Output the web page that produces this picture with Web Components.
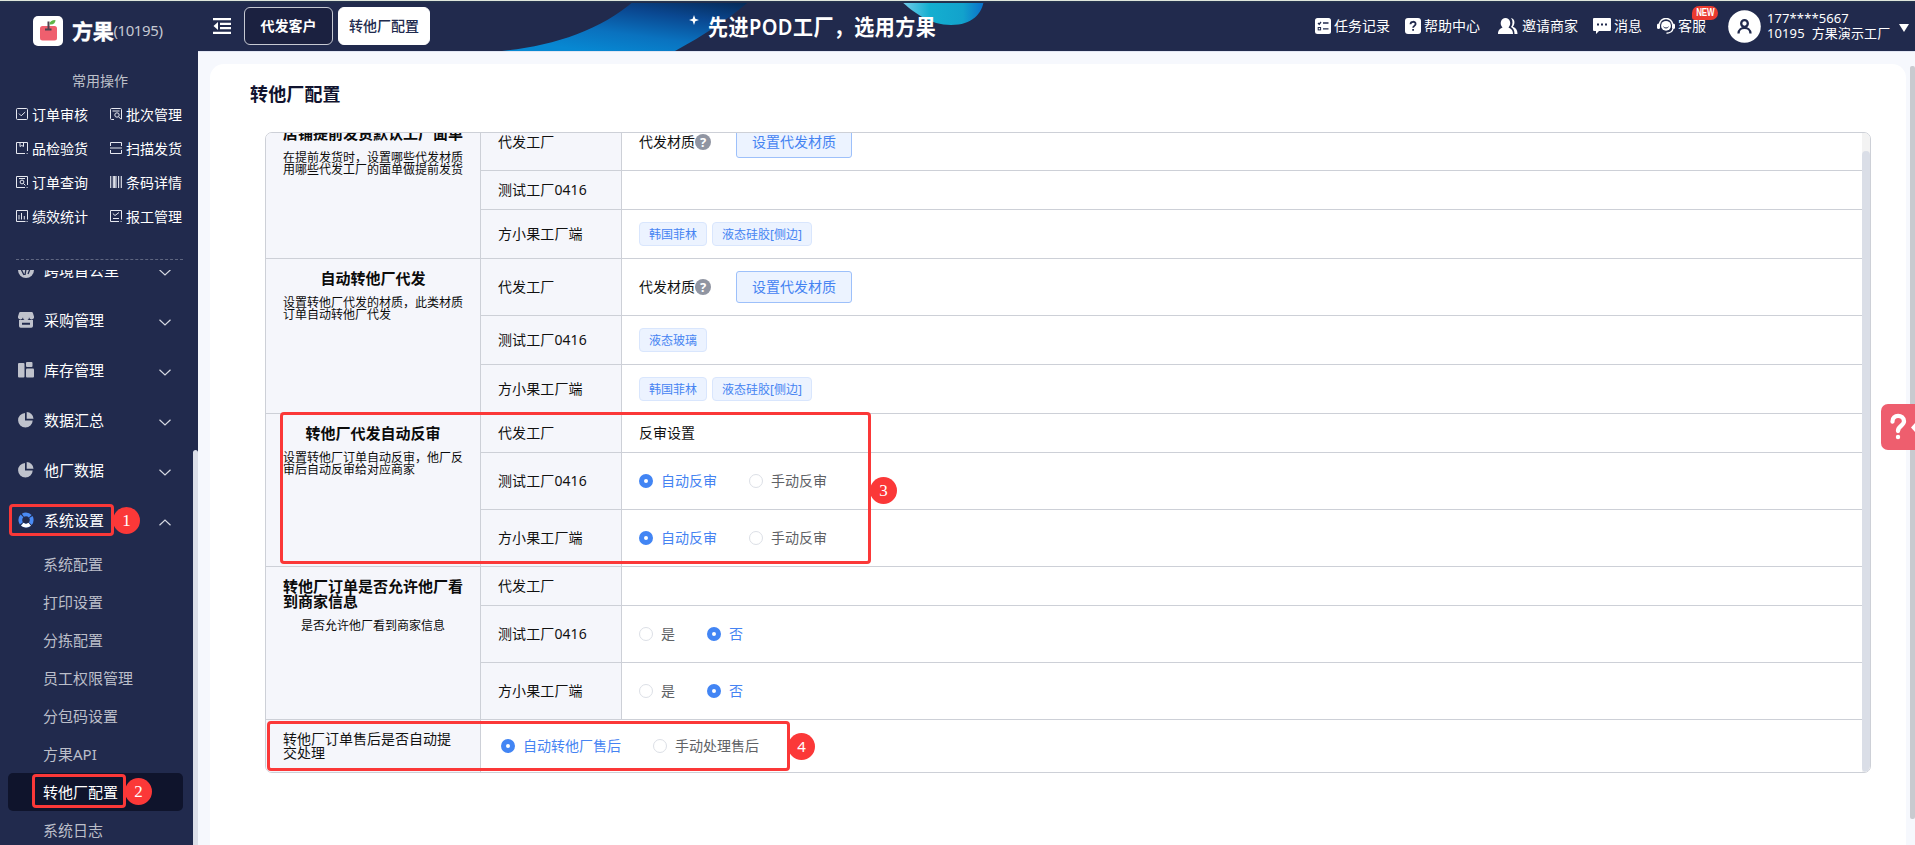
<!DOCTYPE html>
<html lang="zh-CN">
<head>
<meta charset="utf-8">
<title>转他厂配置</title>
<style>
html,body{margin:0;height:100%;overflow:hidden}
body{font-family:"Noto Sans","Noto Sans CJK SC",sans-serif;font-size:14px;color:#111;background:#f6f8fd}
</style>
</head>
<body>
<factory-app></factory-app>
<script>
const define=(name,html,after)=>{
  const t=document.createElement('template');
  t.innerHTML=html;
  customElements.define(name,class extends HTMLElement{
    constructor(){super();this.attachShadow({mode:'open'}).append(t.content.cloneNode(true));}
    connectedCallback(){if(after)after(this,this.shadowRoot);}
  });
};

const ICONS={
  check:'<rect x=".5" y=".5" width="11" height="11" rx="1"/><path d="M3 5.6l2.2 2.2L9.2 4"/>',
  batch:'<path d="M4 11.5H1.5a1 1 0 0 1-1-1v-9a1 1 0 0 1 1-1h9a1 1 0 0 1 1 1V11M2.5 3h7"/><circle cx="7" cy="7" r="2.2"/><path d="M8.6 8.8l2.6 2.6"/>',
  box:'<path d="M9 11.5H.5v-11h11V9M4 .5v4l1.8-1 1.7 1v-4M10.6 11.5h1"/>',
  scan:'<path d="M.5 4V.5h11V4M.5 8v3.5h11V8M0 6h12"/>',
  find:'<path d="M9 11.5H.5v-11h11V9M3 2.5h6M10.6 11.5h1"/><circle cx="6" cy="6" r="1.9"/><path d="M7.4 7.4l2 2"/>',
  bar:'<path d="M.7 0v12M3.3 0v12M6 0v12M8.6 0v12M11.3 0v12M4.6 0v12" stroke-width="1.1"/>',
  stat:'<path d="M9.5 11.5h-9v-11h11v9M3 9.5V5M5.5 9.5V3M8.3 9.5V6M10.6 11.5h1"/>',
  work:'<path d="M9 11.5H.5v-11h11v9M2.8 3.5L5 5.5 9 2.5M3 8.5h6M10.6 11.5h1"/>'
};
define('quick-link',`<style>
:host{display:flex;align-items:center;gap:4px;height:34px;width:72px;color:#fff;font-size:14px;line-height:20px;white-space:nowrap}
svg{flex:none;fill:none;stroke:#e6e8f0;stroke-width:1;margin-top:-2px}
</style><svg width="12" height="12" viewBox="0 0 12 12"></svg><slot></slot>`,
(h,r)=>{r.querySelector('svg').innerHTML=ICONS[h.getAttribute('icon')];});

const MENU={
  world:'<path d="M0 8a8 8 0 0 0 16 0z"/><path d="M3 7l3 6M8 7l-1 6M12 7l-2 5" stroke="#212a4d" stroke-width="1.3" fill="none"/>',
  shop:'<path d="M2.5 0h11A1.5 1.5 0 0 1 15 1.200L16 4.500a2.500 2.500 0 0 1-5 .8 3 3 0 0 1-6 0 2.500 2.500 0 0 1-5-.8L1 1.200A1.500 1.500 0 0 1 2.500 0z"/><path fill-rule="evenodd" d="M1 8h14v6a1.700 1.700 0 0 1-1.700 1.700H2.700A1.700 1.700 0 0 1 1 14zM4 10.700v2h8v-2z"/>',
  store:'<rect x="0" y="1" width="6.500" height="14.500" rx="1"/><rect x="8" y="0" width="6.500" height="5" rx="1"/><rect x="8" y="6.500" width="8" height="9" rx="1"/>',
  pie:'<path d="M7 1v7.500h7.700A7.300 7.300 0 1 1 7 1z"/><path d="M8.700 0A7.200 7.200 0 0 1 15.500 6.800H8.700z"/>',
  ring:'<g fill="none" stroke-width="3.800"><circle cx="8" cy="8" r="5.700" stroke="#4a8bf5" stroke-dasharray="7.900 1.053" stroke-dashoffset="3.950"/><path d="M4.300 12.300a5.700 5.700 0 0 0 7.400 0" stroke="#fff"/></g>'
};
define('menu-item',`<style>
:host{display:flex;align-items:center;height:50px;padding:0 22px 0 18px;color:#fff;font-size:15px;line-height:22px;white-space:nowrap}
.i{flex:none;fill:#bfc2cc;margin:0 10px 0 0}
span{flex:1}
.c{fill:none;stroke:#d6d9e2;stroke-width:1.200;margin-top:4px}
:host([open]) .c{transform:scaleY(-1)}
</style><svg class="i" width="16" height="16" viewBox="0 0 16 16"></svg><span><slot></slot></span><svg class="c" width="12" height="7" viewBox="0 0 12 7"><path d="M.5.8L6 6 11.500.8"/></svg>`,
(h,r)=>{r.querySelector('.i').innerHTML=MENU[h.getAttribute('icon')];});

define('sub-item',`<style>
:host{display:flex;align-items:center;height:38px;margin:0 10px 0 8px;border-radius:5px;color:#bbbec9;font-size:15px;white-space:nowrap;line-height:22px}
:host([active]){background:#0f142c;color:#fff}
span{margin:0 0 0 35px}
</style><span><slot></slot></span>`);

define('side-bar',`<style>
:host{display:flex;flex-direction:column;width:198px;height:845px;background:#212a4d;color:#fff;overflow:hidden}
.logo{display:flex;align-items:center;height:30px;padding:16px 0 0 33px;flex:none}
.logo b{font-size:21px;line-height:30px;margin-left:9px;letter-spacing:-.3px;-webkit-text-stroke:.4px #fff}
.logo i{font-style:normal;font-size:15px;color:#c5c8d2;line-height:28px;letter-spacing:-.4px;margin-top:-2px}
h4{margin:25px 0 0;padding-left:2px;text-align:center;font-weight:400;font-size:14px;line-height:20px;color:#bdc0ca;flex:none}
.q{display:grid;grid-template-columns:94px 72px;padding:7px 0 0 16px;flex:none}
hr{width:167px;margin:25px 0 0 16px;border:0;border-top:1px dashed #5f6680;flex:none}
.v{margin-top:10px;flex:1;overflow:hidden;display:flex}
.l{width:193px;box-sizing:border-box;margin-top:-25px;flex:none}
.t{width:5px;background:#dcdfe8;border-radius:3px 3px 0 0;margin-top:180px;height:500px}
</style>
<div class="logo"><svg width="30" height="30" viewBox="0 0 30 30"><rect width="30" height="30" rx="5" fill="#fff"/><rect x="7" y="10" width="17" height="14.500" rx="2.500" fill="#ef5f6e"/><path d="M12 13.500h6.500M15.500 13V5.500" stroke="#4d4350" stroke-width="2" fill="none"/><path d="M16.500 8.500c0-3 2-4.500 6-4.500 0 3-2 5-6 4.500z" fill="#5fb548"/></svg><b>方果</b><i>(10195)</i></div>
<h4>常用操作</h4>
<div class="q"><quick-link icon="check">订单审核</quick-link><quick-link icon="batch">批次管理</quick-link><quick-link icon="box">品检验货</quick-link><quick-link icon="scan">扫描发货</quick-link><quick-link icon="find">订单查询</quick-link><quick-link icon="bar">条码详情</quick-link><quick-link icon="stat">绩效统计</quick-link><quick-link icon="work">报工管理</quick-link></div>
<hr>
<div class="v"><div class="l"><menu-item icon="world">跨境首公里</menu-item><menu-item icon="shop">采购管理</menu-item><menu-item icon="store">库存管理</menu-item><menu-item icon="pie">数据汇总</menu-item><menu-item icon="pie">他厂数据</menu-item><menu-item icon="ring" open>系统设置</menu-item>
<sub-item>系统配置</sub-item><sub-item>打印设置</sub-item><sub-item>分拣配置</sub-item><sub-item>员工权限管理</sub-item><sub-item>分包码设置</sub-item><sub-item>方果API</sub-item><sub-item active>转他厂配置</sub-item><sub-item>系统日志</sub-item></div><div class="t"></div></div>`);

const HEAD={
  task:'<rect x="0" y="0" width="16" height="16" rx="2.500" fill="#fff"/><path d="M3 5l1.200 1.200L6 4M8 5h5.500M8 10.800h5.500" stroke="#212a4d" stroke-width="1.300" fill="none"/><rect x="3.200" y="9.500" width="2.400" height="2.400" fill="none" stroke="#212a4d"/>',
  help:'<rect x="0" y="0" width="16" height="16" rx="3" fill="#fff"/><path d="M5.500 6.200C5.500 3 10.600 3 10.600 6c0 1.900-2.500 1.900-2.500 3.800M8.100 11v1.800" stroke="#212a4d" stroke-width="1.800" fill="none"/>',
  users:'<path d="M0 16c0-4 2-5.500 4.500-6.500C1 6 3 0 7.500 0s6.500 6 3 9.500C13 10.500 15 12 15 16zM13 0c4 .5 4.500 6 1.800 8.800 3 1.200 4.700 3 4.700 7.200h-3c0-3.500-1-5.500-3.500-7C15 6.500 15 2.500 13 0z" fill="#fff"/>',
  chat:'<path d="M1 0h16a1 1 0 0 1 1 1v11a1 1 0 0 1-1 1H6l-3 3v-3H1a1 1 0 0 1-1-1V1a1 1 0 0 1 1-1z" fill="#fff"/><path d="M4 6.500h2M8 6.500h2M12 6.500h2" stroke="#212a4d" stroke-width="2"/>',
  care:'<path d="M2.500 6.500a6.500 6 0 0 1 13 0" fill="none" stroke="#fff" stroke-width="1.500"/><circle cx="9" cy="7.800" r="4.900" fill="#fff"/><rect x="0" y="5.500" width="3" height="5.500" rx="1.500" fill="#fff"/><rect x="15" y="5.500" width="3" height="5.500" rx="1.500" fill="#fff"/><path d="M16 10.500c-.5 3-3 4.500-6.500 4.700" fill="none" stroke="#fff" stroke-width="1.500"/><path d="M6.500 8.800c1.200 1.600 3.800 1.600 5 0" fill="none" stroke="#212a4d"/>'
};
define('head-link',`<style>
:host{display:flex;align-items:center;color:#fff;font-size:14px;line-height:20px;white-space:nowrap;position:relative}
svg{margin-right:3px}
em{position:absolute;right:-12px;top:-10px;width:26px;height:14px;border-radius:7px 7px 7px 3px;background:#ea3a30;font:700 10px/14px "Liberation Sans",sans-serif;text-align:center;letter-spacing:-.3px}
em span{display:inline-block;transform:scaleX(.8);margin:0 -4px}
</style><svg height="16"></svg><slot></slot>`,
(h,r)=>{const s=r.querySelector('svg');s.setAttribute('width',h.getAttribute('w'));s.innerHTML=HEAD[h.getAttribute('icon')];
if(h.hasAttribute('new'))s.insertAdjacentHTML('afterend','<em><span>NEW</span></em>');});

define('head-tab',`<style>
:host{display:flex;align-items:center;justify-content:center;box-sizing:border-box;height:38px;width:89px;border:1px solid #c6c9d2;border-radius:6px;background:#1b2140;color:#fff;font-size:14px;font-weight:700;line-height:20px;white-space:nowrap}
:host([active]){background:#fff;border-color:#fff;color:#212a4d;width:92px;margin-left:5px;font-weight:500}
</style><slot></slot>`);

define('app-header',`<style>
:host{display:grid;grid-template-columns:1fr;height:51px;background:#212a4d;overflow:hidden}
.art,.bar{grid-area:1/1}
.art{margin-left:300px}
.bar{display:flex;align-items:center;padding:1px 6px 0 15px;z-index:1;min-width:0}
.m{margin-right:13px}
.t{display:flex;align-items:center;margin-left:259px;color:#fff;font-size:20px;letter-spacing:.45px;font-weight:600;line-height:30px;white-space:nowrap;padding-top:3px}
.t svg{margin:-16px 9px 0 0}
.t span{display:inline-block;transform:scaleY(1.060);width:228px}
.r{display:flex;align-items:center;margin-left:auto;gap:15px}
.r [icon=help]{margin-right:3px}
.u{display:flex;align-items:center;margin-left:7px;color:#fff;gap:6px;font-size:13px;line-height:15px;white-space:pre}
.u .n{width:124px;letter-spacing:.1px}
.u svg:last-child{margin:3px 0 0 2px}
</style>
<svg class="art" width="600" height="51" viewBox="498 0 600 51"><defs>
<linearGradient id="s" x1="1" y1="0" x2=".35" y2="1"><stop offset="0" stop-color="#04264f"/><stop offset=".35" stop-color="#0a4790"/><stop offset=".7" stop-color="#0a72bf"/><stop offset="1" stop-color="#0788d2"/></linearGradient>
<linearGradient id="b"><stop offset="0" stop-color="#7ccfec"/><stop offset=".35" stop-color="#14afd0"/><stop offset=".75" stop-color="#12a2cc"/><stop offset="1" stop-color="#0a6fca"/></linearGradient></defs>
<path d="M502 51C552 46 600 31 635 0H751Q718 28 675 51z" fill="url(#s)"/>
<path d="M900 0C914 13 930 25 951 25C972 25 982 14 984 0z" fill="url(#b)"/></svg>
<div class="bar">
<svg class="m" width="18" height="16" viewBox="0 0 18 16" fill="#fff"><path d="M0 0h18v2.300H0zM7 4.700h11V7H7zM7 9h11v2.300H7zM0 13.700h18V16H0zM5 4v8L.5 8z"/></svg>
<head-tab>代发客户</head-tab><head-tab active>转他厂配置</head-tab>
<div class="t"><svg width="10" height="10" viewBox="0 0 10 10"><path d="M5 0L6.300 3.700 10 5 6.300 6.300 5 10 3.700 6.300 0 5 3.700 3.700z" fill="#fff"/></svg><span>先进POD工厂，选用方果</span></div>
<div class="r"><head-link icon="task" w="16">任务记录</head-link><head-link icon="help" w="16">帮助中心</head-link><head-link icon="users" w="21">邀请商家</head-link><head-link icon="chat" w="18">消息</head-link><head-link icon="care" w="18" new>客服</head-link>
<div class="u"><svg width="33" height="33" viewBox="0 0 33 33"><circle cx="16.500" cy="16.500" r="16.300" fill="#fff"/><circle cx="16.500" cy="13.500" r="3.300" fill="none" stroke="#212a4d" stroke-width="2.300"/><path d="M10.500 23.500c0-7.500 12-7.500 12 0" fill="none" stroke="#212a4d" stroke-width="2.300"/></svg><div class="n"><div>177****5667</div><div>10195  方果演示工厂</div></div><svg width="10" height="8" viewBox="0 0 10 8"><path d="M0 0h10L5 8z" fill="#fff"/></svg></div></div>
</div>`);

define('mat-tag',`<style>:host{display:block;box-sizing:border-box;height:24px;padding:0 9px;border:1px solid #d9e6fd;border-radius:4px;background:#ecf3ff;color:#4583f2;font-size:12px;line-height:23px;white-space:nowrap;margin-right:5px}</style><slot></slot>`);
define('mat-button',`<style>:host{display:block;box-sizing:border-box;width:116px;height:32px;margin-left:25px;border:1px solid #9dc0fa;border-radius:3px;background:#ecf3ff;color:#4583f2;font-size:14px;line-height:30px;text-align:center}</style><slot></slot>`);
define('radio-option',`<style>
:host{display:flex;align-items:center;gap:8px;margin-right:32px;color:#606266;line-height:20px}
i{box-sizing:border-box;width:14px;height:14px;border:1px solid #dcdfe6;border-radius:50%;background:#fff}
:host([on]){color:#4583f2}:host([on]) i{border:5px solid #4285f4}
</style><i></i><slot></slot>`);
define('help-dot',`<style>:host{display:block;width:16px;height:16px;border-radius:50%;background:#9095a2;color:#fff;font-size:13px;font-weight:700;line-height:16px;text-align:center}</style>?`);
define('config-group',`<style>
:host{display:grid;grid-template-columns:215px 1fr}
.h{box-sizing:border-box;background:#f5f6fb;border-right:1px solid #cdd0d7;border-bottom:1px solid #cdd0d7;padding:12px 17px;display:flex;flex-direction:column;align-items:center;color:#0b0b0b}
b{font-size:15px;line-height:15px}
p{margin:11px 0 0;font-size:12px;line-height:12px}
</style><div class="h"><b></b><p></p></div><div><slot></slot></div>`,
(h,r)=>{r.querySelector('b').textContent=h.getAttribute('name');r.querySelector('p').textContent=h.getAttribute('note');});
define('config-row',`<style>
:host{display:grid;grid-template-columns:141px 1fr;height:57px}
:host([s]){height:39px}:host([m]){height:49px}
div{display:flex;align-items:center;box-sizing:border-box;border-bottom:1px solid #cdd0d7;padding-left:17px;line-height:20px}
.n{background:#f5f6fb;border-right:1px solid #cdd0d7;letter-spacing:.1px}
</style><div class="n"></div><div><slot></slot></div>`,
(h,r)=>{r.querySelector('.n').textContent=h.getAttribute('name');});

define('config-table',`<style>
:host{display:flex;box-sizing:border-box;width:1606px;height:641px;border:1px solid #cdd0d7;border-radius:7px;overflow:hidden;background:#fff}
.c{flex:1;margin-top:-19px}
.s{width:8px;background:#f3f3f3}
.s i{display:block;margin-top:18px;height:621px;border-radius:4px;background:#dadee7}
.last{display:grid;grid-template-columns:215px 1fr;height:52px}
.last div{display:flex;align-items:center;box-sizing:border-box}
.last .h{background:#f5f6fb;border-right:1px solid #cdd0d7;padding:0 17px;line-height:14px}
.last .b{padding-left:20px}
</style><div class="c">
<config-group name="店铺提前发货默认工厂面单" note="在提前发货时，设置哪些代发材质用哪些代发工厂的面单做提前发货"><config-row name="代发工厂">代发材质<help-dot></help-dot><mat-button>设置代发材质</mat-button></config-row><config-row s name="测试工厂0416"></config-row><config-row m name="方小果工厂端"><mat-tag>韩国菲林</mat-tag><mat-tag>液态硅胶[侧边]</mat-tag></config-row></config-group>
<config-group name="自动转他厂代发" note="设置转他厂代发的材质，此类材质订单自动转他厂代发"><config-row name="代发工厂">代发材质<help-dot></help-dot><mat-button>设置代发材质</mat-button></config-row><config-row m name="测试工厂0416"><mat-tag>液态玻璃</mat-tag></config-row><config-row m name="方小果工厂端"><mat-tag>韩国菲林</mat-tag><mat-tag>液态硅胶[侧边]</mat-tag></config-row></config-group>
<config-group name="转他厂代发自动反审" note="设置转他厂订单自动反审，他厂反审后自动反审给对应商家"><config-row s name="代发工厂">反审设置</config-row><config-row name="测试工厂0416"><radio-option on>自动反审</radio-option><radio-option>手动反审</radio-option></config-row><config-row name="方小果工厂端"><radio-option on>自动反审</radio-option><radio-option>手动反审</radio-option></config-row></config-group>
<config-group name="转他厂订单是否允许他厂看到商家信息" note="是否允许他厂看到商家信息"><config-row s name="代发工厂"></config-row><config-row name="测试工厂0416"><radio-option>是</radio-option><radio-option on>否</radio-option></config-row><config-row name="方小果工厂端"><radio-option>是</radio-option><radio-option on>否</radio-option></config-row></config-group>
<div class="last"><div class="h">转他厂订单售后是否自动提交处理</div><div class="b"><radio-option on>自动转他厂售后</radio-option><radio-option>手动处理售后</radio-option></div></div>
</div><div class="s"><i></i></div>`);

define('mark-box',`<style>:host{position:absolute;box-sizing:border-box;border:3px solid #fb3838;border-radius:4px;z-index:5}</style>`,
h=>{const [x,y,w,t]=h.getAttribute('at').split(' ');h.style.cssText=`left:${x}px;top:${y}px;width:${w}px;height:${t}px`;});
define('mark-dot',`<style>:host{position:absolute;width:27px;height:27px;border-radius:50%;background:#fb3838;color:#fff;font:17px/27px "Liberation Serif",serif;text-align:center;z-index:6}</style><slot></slot>`,
h=>{const [x,y]=h.getAttribute('at').split(' ');h.style.left=x-13.5+'px';h.style.top=y-13.5+'px';});

define('help-float',`<style>:host{position:absolute;right:0;top:404px;width:34px;height:46px;background:#ee5e6e;border-radius:7px 0 0 7px;z-index:4}</style>
<svg width="34" height="46" viewBox="0 0 34 46"><path d="M11.500 17.500C11 10 23 10 23 17.300c0 4.500-6 4.400-6 9.700" fill="none" stroke="#fff" stroke-width="4.300" stroke-linecap="round"/><circle cx="17" cy="33" r="2.200" fill="#fff"/><path d="M34 19v9l-4-4.500z" fill="#fff"/></svg>`);

define('factory-app',`<style>
:host{display:flex;position:relative;width:1915px;height:845px;overflow:hidden}
.edge{position:absolute;left:0;top:0;width:100%;height:3px;background:linear-gradient(#dfe6dc 0 1px,#26344f 1px 2px,#222f4c 2px);z-index:9}
main{flex:1;min-width:0}
.p{display:flex;height:793px;border-top:1px solid #e2e6f3;padding:0;background:#f6f8fd}
.card{margin:12px 4px 0 12px;width:1696px;background:#fff;border-radius:14px 14px 0 0;box-sizing:border-box;padding:18px 0 0 39px}
h1{margin:0 0 26px 1px;font-size:18px;line-height:24px;color:#11132e;letter-spacing:.15px}
config-table{margin-left:16px}
.sb{width:5px;height:753px;margin-top:14px;background:#c8cacf;border-radius:2px}
</style>
<side-bar></side-bar>
<main><app-header></app-header><div class="p"><div class="card"><h1>转他厂配置</h1><config-table></config-table></div><div class="sb"></div></div></main>
<div class="edge"></div>
<help-float></help-float>
<mark-box at="9 504 105 32"></mark-box><mark-dot at="126.500 520.500">1</mark-dot>
<mark-box at="32 774 94 34"></mark-box><mark-dot at="138.500 791.500">2</mark-dot>
<mark-box at="280 412 591 152"></mark-box><mark-dot at="883.500 490.500">3</mark-dot>
<mark-box at="267 721 523 50"></mark-box><mark-dot at="801.500 746.500" style="font-family:'Noto Sans',sans-serif;font-size:15px">4</mark-dot>`);
</script>
</body>
</html>
